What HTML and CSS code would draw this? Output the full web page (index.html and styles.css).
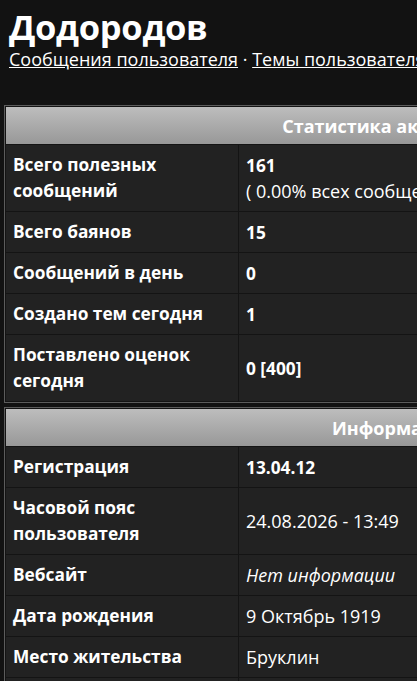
FILE: index.html
```html
<!DOCTYPE html>
<html lang="ru">
<head>
<meta charset="utf-8">
<title>Додородов</title>
<link rel="stylesheet" href="styles.css">
</head>
<body>
<div class="head">
  <h1 class="name">Додородов</h1>
  <div class="links"><a href="#">Сообщения пользователя</a> · <a href="#">Темы пользователя</a></div>
</div>
<table class="box">
  <tr><th colspan="2">Статистика активности</th></tr>
  <tr><td class="k">Всего полезных сообщений</td><td class="v"><b>161</b><br>( 0.00% всех сообщений )</td></tr>
  <tr><td class="k">Всего баянов</td><td class="v"><b>15</b></td></tr>
  <tr><td class="k">Сообщений в день</td><td class="v"><b>0</b></td></tr>
  <tr><td class="k">Создано тем сегодня</td><td class="v"><b>1</b></td></tr>
  <tr><td class="k">Поставлено оценок сегодня</td><td class="v"><b>0 [400]</b></td></tr>
</table>
<table class="box">
  <tr><th colspan="2">Информация</th></tr>
  <tr><td class="k">Регистрация</td><td class="v"><b>13.04.12</b></td></tr>
  <tr><td class="k">Часовой пояс пользователя</td><td class="v">24.08.2026 - 13:49</td></tr>
  <tr><td class="k">Вебсайт</td><td class="v"><i>Нет информации</i></td></tr>
  <tr><td class="k">Дата рождения</td><td class="v">9 Октябрь 1919</td></tr>
  <tr><td class="k">Место жительства</td><td class="v">Бруклин</td></tr>
  <tr><td class="k">Интересы</td><td class="v">—</td></tr>
</table>
</body>
</html>
```

FILE: styles.css
```css
html, body {
  margin: 0;
  padding: 0;
  background: #121212;
  color: #fff;
  font-family: "Open Sans", "Noto Sans", sans-serif;
  overflow: hidden;
}
body {
  width: 790px;
  padding: 0 4px;
}
.head {
  padding: 6px 5px 0;
}
.name {
  margin: 0;
  font-size: 34.5px;
  line-height: 42px;
  font-weight: 700;
  letter-spacing: -0.3px;
}
.links {
  font-size: 18px;
  line-height: 22px;
  white-space: nowrap;
}
.links a {
  color: #fff;
  text-decoration: underline;
}
.box {
  width: 782px;
  border: 1px solid #5c5c5c;
  border-spacing: 1px;
  background: #141414;
  margin-top: 4px;
}
.head + .box {
  margin-top: 35px;
}
.box th {
  height: 37px;
  padding: 0;
  background: linear-gradient(#bdbdbd, #989898);
  color: #fff;
  font-size: 18px;
  font-weight: 700;
  text-align: center;
}
.box td {
  background: #222;
  font-size: 18px;
  line-height: 26px;
  padding: 7px;
  vertical-align: middle;
}
.box td b {
  font-size: 17.3px;
  line-height: 1;
}
.box td.k {
  width: 218px;
  font-weight: 700;
  font-size: 17.3px;
}
```
